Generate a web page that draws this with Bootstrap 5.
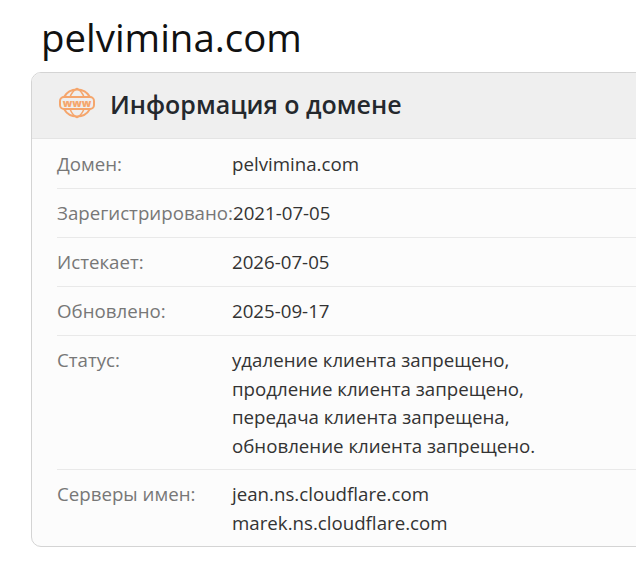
<!DOCTYPE html>
<html lang="ru"><head><meta charset="utf-8">
<link href="https://cdn.jsdelivr.net/npm/bootstrap@5.3.0/dist/css/bootstrap.min.css" rel="stylesheet">
<style>
html,body{overflow:hidden;background:#fff}
body{font-family:"Open Sans","Noto Sans",sans-serif;color:#212529;height:566px}
.page-wrap{width:710px;padding:0 0 0 31px}
.site-title{font-size:38.4px;font-weight:400;line-height:50px;margin:12px 0 10px 10px;color:#111}
.info-box{border:1px solid #d4d4d4;border-radius:10px;background:#fcfcfc;overflow:hidden}
.info-head{background:#efefef;height:66px;padding-left:27px;gap:15px;border-bottom:1px solid #e4e4e4}
.info-head svg{margin-bottom:6px}
.info-head h2{font-size:25px;font-weight:600;margin:0 0 4px;color:#24282d}
.info-body{padding:0 0 0 25px}
.info-row{border-bottom:1px solid #e9e9e9;padding:12px 0 0;font-size:18.7px;line-height:25px;height:49px}
.info-row:first-child{height:50px;padding-top:13px}
.info-row.is-tall{height:134px}
.info-row.is-last{border-bottom:0;height:76px}
.info-key{min-width:175px;color:#777;white-space:nowrap;margin-top:-1px}
.info-val{color:#333;line-height:28.6px;margin-top:-2px}
</style></head><body>
<div class="page-wrap">
<h1 class="site-title">pelvimina.com</h1>
<div class="info-box">
<div class="info-head d-flex align-items-center">
<svg width="36" height="32" viewBox="0 0 36 32" fill="none" stroke="#f5a66d" stroke-width="2"><path d="M5 10A15 15 0 0 1 31 10M5 22A15 15 0 0 0 31 22"/><path d="M11 10C13 5 15 3 18 1.500C21 3 23 5 25 10M11 22C13 27 15 29 18 30.500C21 29 23 27 25 22" stroke-width="1.500"/><rect x="1" y="10" width="34" height="12" rx="4"/><text x="18" y="19.500" text-anchor="middle" font-size="10.500" font-weight="800" fill="#f5a66d" stroke="none" font-family="Open Sans">www</text></svg>
<h2>Информация о домене</h2>
</div>
<div class="info-body">
<div class="info-row d-flex"><div class="info-key">Домен:</div><div class="info-val">pelvimina.com</div></div>
<div class="info-row d-flex"><div class="info-key">Зарегистрировано:</div><div class="info-val">2021-07-05</div></div>
<div class="info-row d-flex"><div class="info-key">Истекает:</div><div class="info-val">2026-07-05</div></div>
<div class="info-row d-flex"><div class="info-key">Обновлено:</div><div class="info-val">2025-09-17</div></div>
<div class="info-row is-tall d-flex"><div class="info-key">Статус:</div><div class="info-val">удаление клиента запрещено,<br>продление клиента запрещено,<br>передача клиента запрещена,<br>обновление клиента запрещено.</div></div>
<div class="info-row is-last d-flex"><div class="info-key">Серверы имен:</div><div class="info-val">jean.ns.cloudflare.com<br>marek.ns.cloudflare.com</div></div>
</div>
</div>
</div>
</body></html>
